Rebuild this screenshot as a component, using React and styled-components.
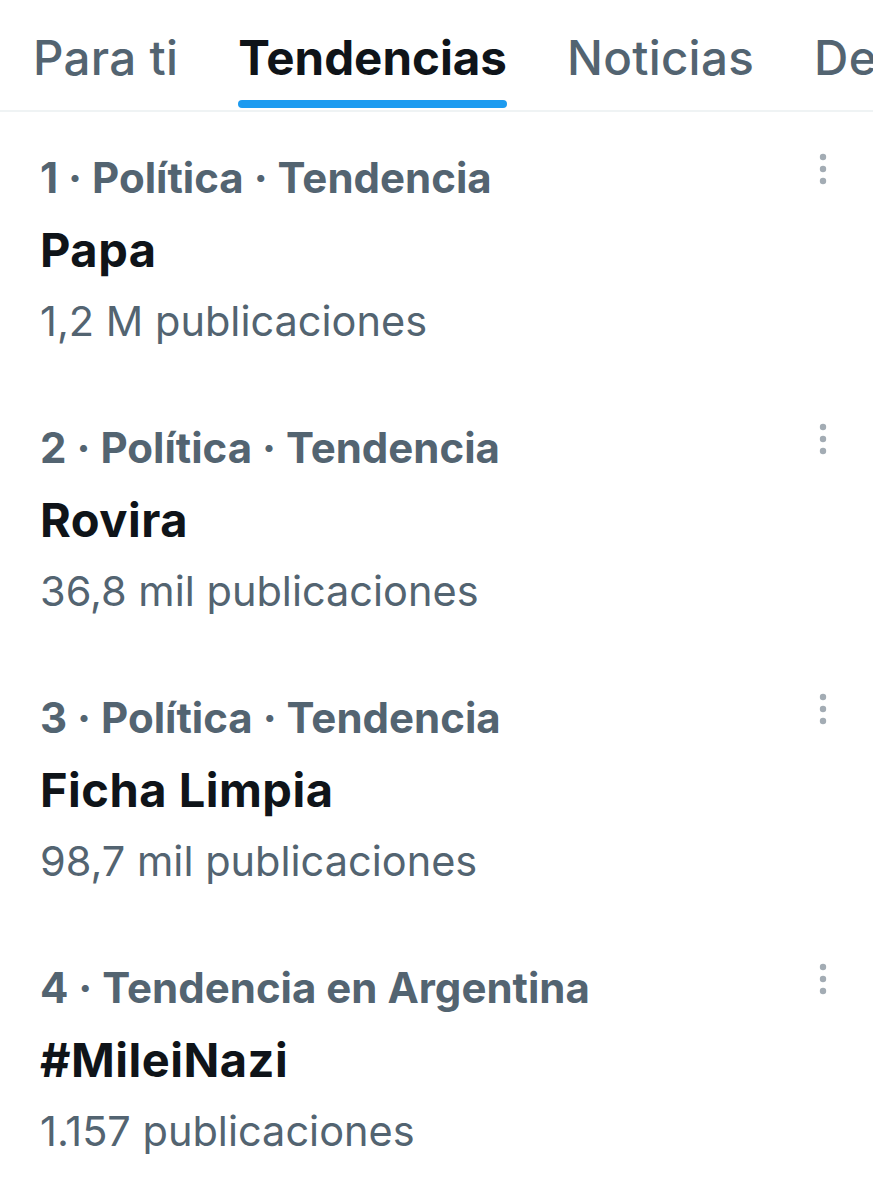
import React from 'react';
import styled, { createGlobalStyle } from 'styled-components';

const GlobalStyle = createGlobalStyle`
  html, body {
    margin: 0;
    padding: 0;
    background: #ffffff;
  }
  body {
    font-family: Inter, Roboto, "Liberation Sans", sans-serif;
    -webkit-font-smoothing: antialiased;
  }
`;

const tabs = ['Para ti', 'Tendencias', 'Noticias', 'Deportes'];

const trends = [
  { meta: '1 · Política · Tendencia', title: 'Papa', count: '1,2 M publicaciones' },
  { meta: '2 · Política · Tendencia', title: 'Rovira', count: '36,8 mil publicaciones' },
  { meta: '3 · Política · Tendencia', title: 'Ficha Limpia', count: '98,7 mil publicaciones' },
  { meta: '4 · Tendencia en Argentina', title: '#MileiNazi', count: '1.157 publicaciones' },
];

function MoreIcon() {
  return (
    <svg width="14" height="36" viewBox="0 0 14 36">
      <circle cx="7" cy="5" r="3.2" fill="#a3acb4" />
      <circle cx="7" cy="17" r="3.2" fill="#a3acb4" />
      <circle cx="7" cy="29" r="3.2" fill="#a3acb4" />
    </svg>
  );
}

export default function App() {
  return (
    <Page>
      <GlobalStyle />
      <TabBar>
        {tabs.map((t, i) => (
          <Tab key={t}>
            <TabLabel active={i === 1}>{t}</TabLabel>
          </Tab>
        ))}
      </TabBar>
      <List>
        {trends.map((t) => (
          <Row key={t.title}>
            <Info>
              <Meta>{t.meta}</Meta>
              <Title>{t.title}</Title>
              <Count>{t.count}</Count>
            </Info>
            <MoreButton>
              <MoreIcon />
            </MoreButton>
          </Row>
        ))}
      </List>
    </Page>
  );
}

const Page = styled.div`
  width: 873px;
  height: 1200px;
  overflow: hidden;
  background: #fff;
`;

const TabBar = styled.div`
  display: flex;
  height: 110px;
  padding-left: 2px;
  border-bottom: 2px solid #eff3f4;
  white-space: nowrap;
  overflow: hidden;
`;

const Tab = styled.div`
  display: flex;
  padding: 0 30px;
  flex-shrink: 0;

  &:first-child {
    padding-left: 31px;
  }
`;

const TabLabel = styled.span`
  position: relative;
  display: flex;
  align-items: center;
  height: 100%;
  padding-top: 4px;
  box-sizing: border-box;
  font-size: 47.5px;
  font-weight: ${(p) => (p.active ? 700 : 500)};
  color: ${(p) => (p.active ? '#0f1419' : '#536471')};
  letter-spacing: ${(p) => (p.active ? '0' : '0.3px')};

  &::after {
    content: '';
    display: ${(p) => (p.active ? 'block' : 'none')};
    position: absolute;
    left: 0;
    right: 0;
    bottom: 2px;
    height: 8px;
    border-radius: 4px;
    background: #1d9bf0;
  }
`;

const List = styled.div`
  display: flex;
  flex-direction: column;
`;

const Row = styled.div`
  display: flex;
  justify-content: space-between;
  align-items: flex-start;
  padding: 29px 43px 25px 40px;
`;

const Info = styled.div`
  display: flex;
  flex-direction: column;
`;

const Meta = styled.div`
  font-size: 42px;
  line-height: 74px;
  font-weight: 700;
  color: #536471;
`;

const Title = styled.div`
  font-size: 47px;
  line-height: 70px;
  font-weight: 700;
  letter-spacing: 0.5px;
  color: #0f1419;
`;

const Count = styled.div`
  font-size: 41.5px;
  line-height: 72px;
  font-weight: 400;
  color: #536471;
`;

const MoreButton = styled.div`
  display: flex;
  margin-top: 11px;
`;
